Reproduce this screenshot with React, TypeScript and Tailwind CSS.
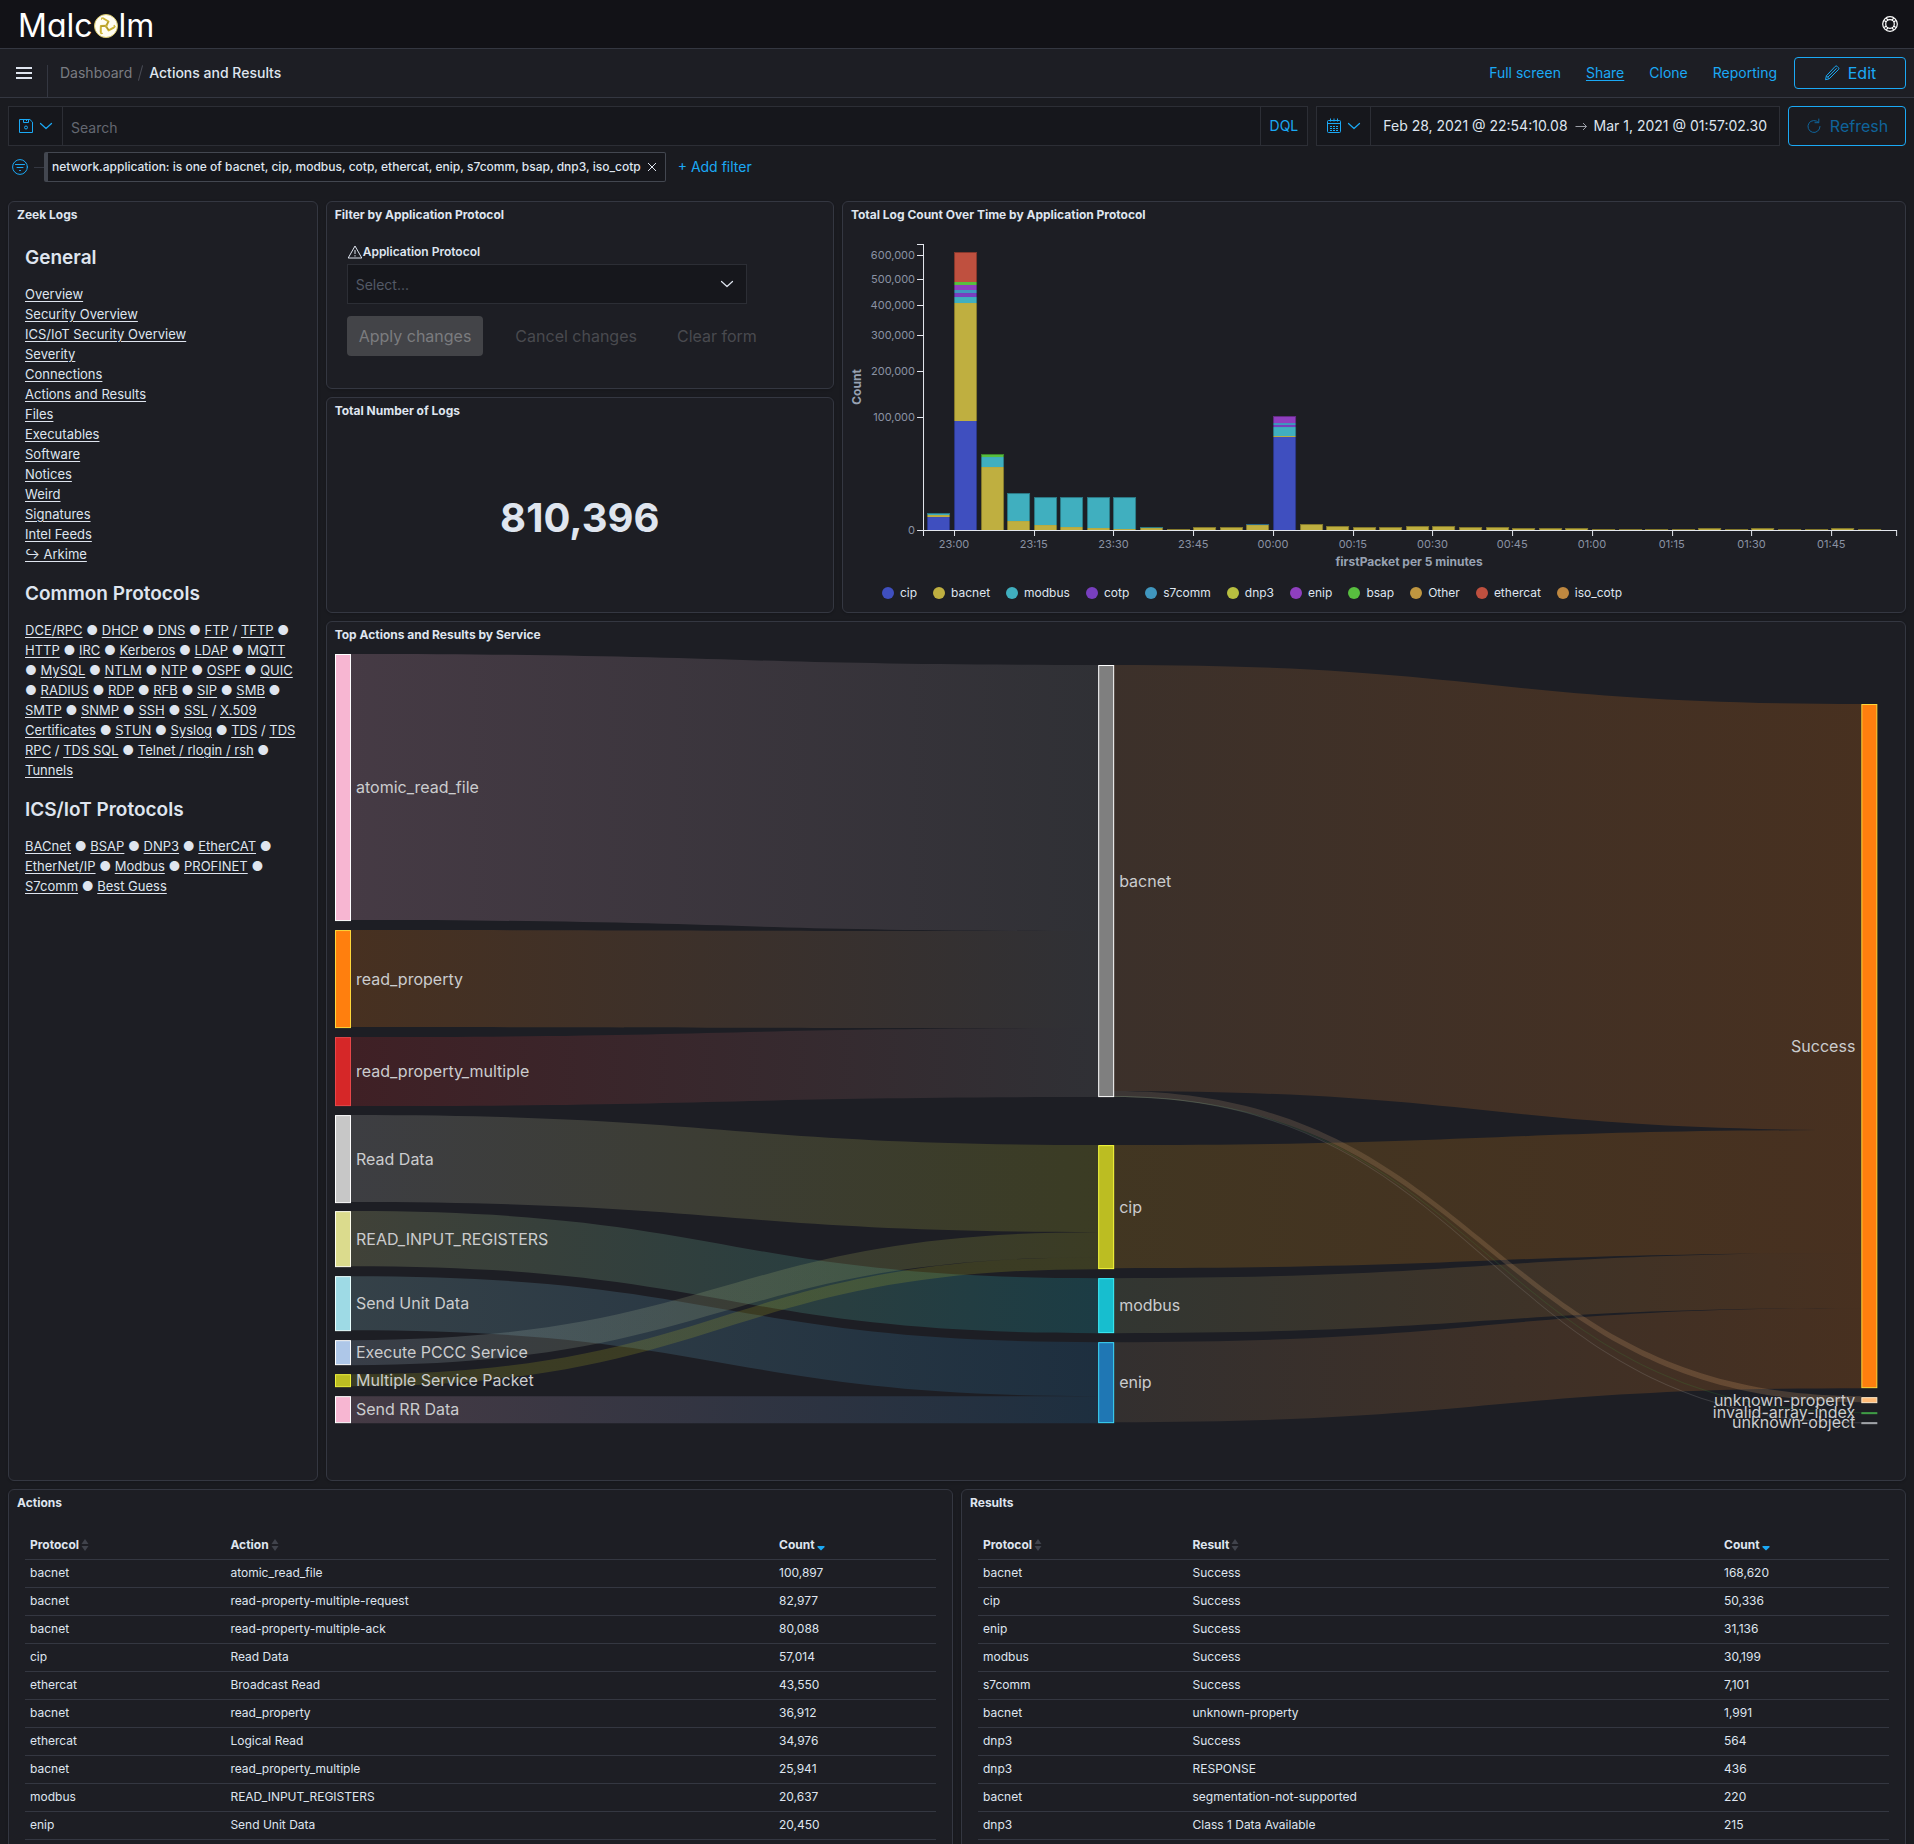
import { Fragment, type ReactNode } from 'react';

/* ---------- icons ---------- */

function MenuIcon() {
  return (
    <svg width="16" height="16" viewBox="0 0 16 16" fill="#dfe5ef" aria-hidden="true">
      <path d="M0 2h16v2H0zM0 7h16v2H0zM0 12h16v2H0z" />
    </svg>
  );
}

function HelpIcon() {
  return (
    <svg width="16" height="16" viewBox="0 0 16 16" fill="none" stroke="#ffffff" strokeWidth="1.2" aria-hidden="true">
      <circle cx="8" cy="8" r="7.3" />
      <circle cx="8" cy="8" r="4.3" />
      <path d="M2.2 4.4 4.4 6M4.4 2.2 6 4.4M11.6 2.2 10 4.4M13.8 4.4 11.6 6M13.8 11.6 11.6 10M11.6 13.8 10 11.6M4.4 13.8 6 11.6M2.2 11.6 4.4 10" />
    </svg>
  );
}

function PencilIcon() {
  return (
    <svg width="16" height="16" viewBox="0 0 16 16" fill="none" stroke="currentColor" strokeLinejoin="round" aria-hidden="true">
      <path d="M11.2 1.4a1.4 1.4 0 0 1 2 0l1.2 1.2a1.4 1.4 0 0 1 0 2L5.2 13.8l-3.7.9.9-3.9z" />
      <path d="M2.4 10.8 5.2 13.8M3.8 12.2 12.6 3.3" />
    </svg>
  );
}

function SaveIcon() {
  return (
    <svg width="16" height="16" viewBox="0 0 16 16" fill="none" stroke="currentColor" aria-hidden="true">
      <path d="M1.5 1.5h10.4l2.6 2.6v10.4h-13z" />
      <path d="M5.5 1.5v3h5v-3M8.5 1.500v1.5" />
      <circle cx="8" cy="9.5" r="1.5" />
    </svg>
  );
}

function ChevronIcon() {
  return (
    <svg width="14" height="14" viewBox="0 0 14 14" fill="none" stroke="currentColor" strokeWidth="1.2" strokeLinecap="round" strokeLinejoin="round" aria-hidden="true">
      <path d="m1.5 4.5 5.5 5 5.5-5" />
    </svg>
  );
}

function CalendarIcon() {
  return (
    <svg width="16" height="16" viewBox="0 0 16 16" fill="none" stroke="currentColor" aria-hidden="true">
      <rect x="1.5" y="2.5" width="13" height="12" rx="1" />
      <path d="M1.5 5.5h13M4.5.5v3M8 .5v3M11.500.5v3" />
      <path d="M4 8.5h2M7 8.5h2M10 8.5h2M4 10.5h2M7 10.5h2M10 10.5h2M4 12.5h2M7 12.5h2M10 12.5h2" />
    </svg>
  );
}

function RefreshIcon() {
  return (
    <svg width="16" height="16" viewBox="0 0 16 16" fill="none" stroke="currentColor" strokeLinecap="round" aria-hidden="true">
      <path d="M12.5 4.5A6 6 0 1 0 14 8.5M12.800 1v3.7H9" />
    </svg>
  );
}

function FilterIcon() {
  return (
    <svg width="16" height="16" viewBox="0 0 16 16" fill="none" stroke="currentColor" strokeLinecap="round" aria-hidden="true">
      <circle cx="8" cy="8" r="7.4" />
      <path d="M3.500 5.5h9M5 8.5h6M7.5 11.5h1" />
    </svg>
  );
}

function WarningIcon() {
  return (
    <svg width="16" height="14" viewBox="0 0 16 14" fill="none" stroke="#dfe5ef" strokeLinejoin="round" aria-hidden="true">
      <path d="M8 1 1.2 13h13.6z" />
      <path d="M8 5v4M8 10.2v1.3" />
    </svg>
  );
}

function SortIcon() {
  return (
    <svg width="8" height="12" viewBox="0 0 8 12" fill="#40434c" aria-hidden="true">
      <path d="M4 0l3.500 5H.5zM4 12 .5 7h7z" />
    </svg>
  );
}

function SortDownIcon() {
  return (
    <svg width="8" height="12" viewBox="0 0 8 12" fill="#1ba9f5" aria-hidden="true">
      <path d="M.5 7h7v1.300L4 11.500.5 8.300z" />
    </svg>
  );
}

function Emblem() {
  return (
    <svg width="24" height="24" viewBox="0 0 24 24" aria-hidden="true">
      <circle cx="12" cy="12" r="11.5" fill="#fffdf2" stroke="#d8c766" />
      {[0, 120, 240].map((angle) => (
        <g key={angle} transform={`rotate(${angle} 12 12)`} fill="none" stroke="#cdb436" strokeLinecap="round" strokeLinejoin="round">
          <path d="M12 12.500 14.500 7.500 9.500 4.500" strokeWidth="2" />
          <path d="M9.500 4.500 8 3.800 7.500 5.200" strokeWidth="1.200" />
          <path d="M12.500 11 14 8" stroke="#8e7a1c" strokeWidth="0.600" />
        </g>
      ))}
    </svg>
  );
}

/* ---------- shared ---------- */

function Panel({ title, className, children }: { title: string; className: string; children: ReactNode }) {
  return (
    <section className={`flex min-w-0 flex-col overflow-hidden rounded-md border border-[#343741] bg-[#1d1e24] shadow-sm ${className}`}>
      <h2 className="px-2 py-1 text-xs leading-[18px] font-bold">{title}</h2>
      {children}
    </section>
  );
}

/* ---------- page header ---------- */

function TopBar() {
  return (
    <header className="flex h-[49px] items-center justify-between border-b border-[#343741] bg-[#121217] px-4">
      <a href="#home" aria-label="Malcolm" className="flex items-center gap-px pt-1 pl-0.5 text-[32px] leading-[44px] text-white [font-feature-settings:'cv11']">
        <span>Malc</span>
        <Emblem />
        <span>lm</span>
      </a>
      <button type="button" aria-label="Help">
        <HelpIcon />
      </button>
    </header>
  );
}

function NavBar() {
  return (
    <div className="flex h-[49px] items-center border-b border-[#343741] bg-[#1d1e24] pr-2 text-sm">
      <button type="button" aria-label="Menu" className="pr-[15px] pl-4">
        <MenuIcon />
      </button>
      <div className="h-8 w-px self-end bg-[#343741]" />
      <nav aria-label="Breadcrumb" className="flex items-center pl-3">
        <a href="#dashboards" className="text-[#7a7c82]">Dashboard</a>
        <span className="mx-2 h-4 w-px rotate-15 bg-[#4a4d57]" />
        <span className="font-medium">Actions and Results</span>
      </nav>
      <div className="ml-auto flex items-center text-[#1ba9f5]">
        <div className="mr-[17px] flex gap-[25px]">
          <button type="button">Full screen</button>
          <button type="button" className="underline underline-offset-2">Share</button>
          <button type="button">Clone</button>
          <button type="button">Reporting</button>
        </div>
        <button type="button" className="flex h-8 w-28 items-center justify-center gap-2 rounded border border-[#1ba9f5] text-base">
          <PencilIcon />
          Edit
        </button>
      </div>
    </div>
  );
}

function QueryBar() {
  return (
    <div className="flex gap-2 px-2 pt-2 text-sm">
      <div className="flex h-10 flex-1 border border-[#2c2e35] bg-[#16171c]">
        <button type="button" aria-label="Saved queries" className="flex w-[54px] items-center gap-[5px] border-r border-[#2c2e35] pl-[9px] text-[#1ba9f5]">
          <SaveIcon />
          <ChevronIcon />
        </button>
        <input aria-label="Search" placeholder="Search" className="min-w-0 flex-1 px-2 pt-1 placeholder-[#646871] outline-none" />
        <button type="button" className="border-l border-[#2c2e35] px-[9px] text-[#1ba9f5]">DQL</button>
      </div>
      <div className="flex h-10 border border-[#2c2e35] bg-[#16171c]">
        <button type="button" aria-label="Quick time ranges" className="flex w-[54px] items-center gap-[5px] border-r border-[#2c2e35] pl-[9px] text-[#1ba9f5]">
          <CalendarIcon />
          <ChevronIcon />
        </button>
        <div className="flex items-center gap-1.5 px-3">
          <button type="button">Feb 28, 2021 @ 22:54:10.08</button>
          <svg width="14" height="14" viewBox="0 0 14 14" fill="none" stroke="#9a9da5" aria-hidden="true">
            <path d="M1.5 7.5h11M9 4l3.5 3.5L9 11" />
          </svg>
          <button type="button">Mar 1, 2021 @ 01:57:02.30</button>
        </div>
      </div>
      <button type="button" className="flex h-10 w-[118px] items-center justify-center gap-2 rounded border border-[#1ba9f5] text-base text-[#0f649b]">
        <RefreshIcon />
        Refresh
      </button>
    </div>
  );
}

function FilterBar() {
  return (
    <div className="flex items-center px-3 pt-1.5">
      <button type="button" aria-label="Filter options" className="text-[#1ba9f5]">
        <FilterIcon />
      </button>
      <span className="ml-1.5 h-px w-[10px] bg-[#343741]" />
      <div className="flex h-[30px] items-center rounded-xs border border-l-4 border-[#434750] bg-[#16171c] pr-2 pl-1 text-xs font-medium">
        <button type="button">network.application: is one of bacnet, cip, modbus, cotp, ethercat, enip, s7comm, bsap, dnp3, iso_cotp</button>
        <button type="button" aria-label="Delete filter" className="ml-1.5">
          <svg width="10" height="10" viewBox="0 0 10 10" fill="none" stroke="#dfe5ef" aria-hidden="true">
            <path d="m1 1 8 8M9 1 1 9" />
          </svg>
        </button>
      </div>
      <button type="button" className="ml-3 text-sm text-[#1ba9f5]">+ Add filter</button>
    </div>
  );
}

/* ---------- Zeek logs ---------- */

const GENERAL = [
  'Overview', 'Security Overview', 'ICS/IoT Security Overview', 'Severity', 'Connections', 'Actions and Results', 'Files',
  'Executables', 'Software', 'Notices', 'Weird', 'Signatures', 'Intel Feeds', '↪ Arkime',
];

/* Each entry holds links that are separated by a slash. */
const COMMON = [
  ['DCE/RPC'], ['DHCP'], ['DNS'], ['FTP', 'TFTP'], ['HTTP'], ['IRC'], ['Kerberos'], ['LDAP'], ['MQTT'], ['MySQL'], ['NTLM'],
  ['NTP'], ['OSPF'], ['QUIC'], ['RADIUS'], ['RDP'], ['RFB'], ['SIP'], ['SMB'], ['SMTP'], ['SNMP'], ['SSH'],
  ['SSL', 'X.509 Certificates'], ['STUN'], ['Syslog'], ['TDS', 'TDS RPC', 'TDS SQL'], ['Telnet / rlogin / rsh'], ['Tunnels'],
];

const ICS = [['BACnet'], ['BSAP'], ['DNP3'], ['EtherCAT'], ['EtherNet/IP'], ['Modbus'], ['PROFINET'], ['S7comm'], ['Best Guess']];

function DocLink({ label }: { label: string }) {
  return <a href="#dashboard" className="underline underline-offset-2">{label}</a>;
}

function LinkCloud({ groups }: { groups: string[][] }) {
  return (
    <p>
      {groups.map((group, i) => (
        <Fragment key={i}>
          {i > 0 && ' ● '}
          {group.map((label, j) => (
            <Fragment key={label}>
              {j > 0 && ' / '}
              <DocLink label={label} />
            </Fragment>
          ))}
        </Fragment>
      ))}
    </p>
  );
}

function DocHeading({ children }: { children: string }) {
  return <h3 className="mb-3 text-[19px] leading-7 font-semibold">{children}</h3>;
}

function ZeekLogs() {
  return (
    <div className="flex flex-col gap-4 px-4 pt-4 text-[13px] leading-5">
      <div>
        <DocHeading>General</DocHeading>
        <ul>
          {GENERAL.map((label) => (
            <li key={label}><DocLink label={label} /></li>
          ))}
        </ul>
      </div>
      <div>
        <DocHeading>Common Protocols</DocHeading>
        <LinkCloud groups={COMMON} />
      </div>
      <div>
        <DocHeading>ICS/IoT Protocols</DocHeading>
        <LinkCloud groups={ICS} />
      </div>
    </div>
  );
}

/* ---------- filter form ---------- */

function FilterForm() {
  return (
    <form className="px-5 pt-4">
      <label htmlFor="protocol" className="flex h-4 items-center text-xs font-semibold">
        <WarningIcon />
        Application Protocol
      </label>
      <div className="relative mt-1 flex h-10 max-w-[400px] items-center border border-[#2c2e35] bg-[#16171c]">
        <input id="protocol" placeholder="Select..." className="h-full w-full px-2 text-sm placeholder-[#535966] outline-none" />
        <span className="pointer-events-none absolute right-3">
          <ChevronIcon />
        </span>
      </div>
      <div className="mt-3 flex text-base">
        <button type="button" disabled className="mr-3 h-10 rounded bg-[#434448] px-3 text-[#7b7c7f]">Apply changes</button>
        <button type="button" disabled className="px-5 text-[#494a4f]">Cancel changes</button>
        <button type="button" disabled className="px-5 text-[#494a4f]">Clear form</button>
      </div>
    </form>
  );
}

/* ---------- histogram ---------- */

const C = {
  cip: '#3f4fbf',
  bacnet: '#bfaf40',
  modbus: '#40afbf',
  cotp: '#783fbf',
  s7comm: '#4097bf',
  dnp3: '#b8bf40',
  enip: '#8f3fbf',
  bsap: '#58bf3f',
  Other: '#bf9640',
  ethercat: '#bf503f',
  iso_cotp: '#bf8840',
};

type Protocol = keyof typeof C;

/* One stack per five minutes; every part gives the height of its top edge above the axis. */
const STACKS: [Protocol, number][][] = [
  [['cip', 13], ['bacnet', 15], ['modbus', 17]],
  [['cip', 109], ['bacnet', 227], ['modbus', 233], ['cotp', 237], ['s7comm', 240], ['enip', 245], ['bsap', 248], ['ethercat', 278]],
  [['bacnet', 63], ['modbus', 73], ['bsap', 76]],
  [['bacnet', 9], ['modbus', 37]],
  [['bacnet', 5], ['modbus', 33]],
  [['bacnet', 3], ['modbus', 33]],
  [['bacnet', 2], ['modbus', 33]],
  [['bacnet', 1], ['modbus', 33]],
  [['bacnet', 2], ['modbus', 3]],
  [['bacnet', 1]],
  [['bacnet', 3]],
  [['bacnet', 3]],
  [['bacnet', 5], ['s7comm', 6]],
  [['cip', 93], ['bacnet', 94], ['modbus', 103], ['cotp', 105], ['s7comm', 107], ['enip', 114]],
  [['bacnet', 6]],
  [['bacnet', 4]],
  ...[3, 3, 4, 4, 3, 3, 2, 2, 2, 1, 1, 1, 1, 2, 1, 2, 1, 1, 2, 1].map((h): [Protocol, number][] => [['bacnet', h]]),
];

const COUNT_TICKS: [string, number][] = [
  ['600,000', 275], ['500,000', 251], ['400,000', 225], ['300,000', 195], ['200,000', 159], ['100,000', 113], ['0', 0],
];

const TIME_TICKS = ['23:00', '23:15', '23:30', '23:45', '00:00', '00:15', '00:30', '00:45', '01:00', '01:15', '01:30', '01:45'];

const AXIS_X = 80;
const AXIS_Y = 302;
const FIRST_HOUR = 111;
const BAR_PITCH = 26.58;

function Histogram() {
  return (
    <>
      <svg viewBox="0 0 1062 346" className="w-full" role="img" aria-label="Log count per five minutes">
        {STACKS.map((stack, i) => {
          const x = Math.round(FIRST_HOUR + (i - 1) * BAR_PITCH);
          return stack.map(([protocol, top], j) => {
            const bottom = j > 0 ? stack[j - 1][1] : 0;
            return <rect key={`${i}-${j}`} x={x} y={AXIS_Y - top} width="23" height={top - bottom} fill={C[protocol]} />;
          });
        })}
        {STACKS.map((stack, i) => {
          const x = Math.round(FIRST_HOUR + (i - 1) * BAR_PITCH);
          const top = stack[stack.length - 1][1];
          return <rect key={i} x={x + 0.5} y={AXIS_Y - top + 0.5} width="22" height={top} fill="none" stroke="#000" strokeOpacity="0.3" />;
        })}
        <g fill="none" stroke="#e4e7ee">
          <path d={`M${AXIS_X - 6} 16.5h6.5V${AXIS_Y + 6}`} />
          <path d={`M${AXIS_X} ${AXIS_Y + 0.5}H1053.5v5.5`} />
          {COUNT_TICKS.map(([label, h]) => (
            <path key={label} d={`M${AXIS_X - 6} ${AXIS_Y - h + 0.5}h6`} />
          ))}
          {TIME_TICKS.map((label, i) => (
            <path key={label} d={`M${Math.round(FIRST_HOUR + i * 3 * BAR_PITCH) + 0.5} ${AXIS_Y}v6`} />
          ))}
        </g>
        <g fill="#8a92a3" fontSize="11">
          {COUNT_TICKS.map(([label, h]) => (
            <text key={label} x={AXIS_X - 8} y={AXIS_Y - h + 4} textAnchor="end">{label}</text>
          ))}
          {TIME_TICKS.map((label, i) => (
            <text key={label} x={FIRST_HOUR + i * 3 * BAR_PITCH} y={AXIS_Y + 18} textAnchor="middle">{label}</text>
          ))}
        </g>
        <g fill="#98a2b3" fontSize="12" fontWeight="700" textAnchor="middle">
          <text transform="translate(18 159) rotate(-90)">Count</text>
          <text x="566" y={AXIS_Y + 36}>firstPacket per 5 minutes</text>
        </g>
      </svg>
      <ul className="mt-[11px] flex flex-wrap gap-4 pl-[39px] text-xs leading-4">
        {Object.entries(C).map(([label, color]) => (
          <li key={label} className="flex items-center gap-1.5">
            <span className="size-3 rounded-full" style={{ backgroundColor: color }} />
            {label}
          </li>
        ))}
      </ul>
    </>
  );
}

/* ---------- sankey ---------- */

type Node = { name: string; x: number; y0: number; y1: number; color: string; edge: string };

const NODE_W = 15;
const MID_X = 763;
const END_X = 1526;

const NODES: Node[] = [
  { name: 'atomic_read_file', x: 0, y0: 0, y1: 266, color: '#f7b6d2', edge: '#ffffff' },
  { name: 'read_property', x: 0, y0: 276, y1: 373, color: '#ff7f0e', edge: '#ffd83a' },
  { name: 'read_property_multiple', x: 0, y0: 383, y1: 451, color: '#d62728', edge: '#e8474a' },
  { name: 'Read Data', x: 0, y0: 461, y1: 548, color: '#c7c7c7', edge: '#ffffff' },
  { name: 'READ_INPUT_REGISTERS', x: 0, y0: 557, y1: 612, color: '#dbdb8d', edge: '#ffffee' },
  { name: 'Send Unit Data', x: 0, y0: 622, y1: 676, color: '#9edae5', edge: '#eaffff' },
  { name: 'Execute PCCC Service', x: 0, y0: 686, y1: 710, color: '#aec7e8', edge: '#ffffff' },
  { name: 'Multiple Service Packet', x: 0, y0: 720, y1: 732, color: '#bcbd22', edge: '#eef03c' },
  { name: 'Send RR Data', x: 0, y0: 742, y1: 768, color: '#f7b6d2', edge: '#ffffff' },
  { name: 'bacnet', x: MID_X, y0: 11, y1: 442, color: '#7f7f7f', edge: '#ffffff' },
  { name: 'cip', x: MID_X, y0: 491, y1: 614, color: '#bcbd22', edge: '#fcff3c' },
  { name: 'modbus', x: MID_X, y0: 624, y1: 678, color: '#17becf', edge: '#3cf4ff' },
  { name: 'enip', x: MID_X, y0: 688, y1: 768, color: '#1f77b4', edge: '#3cdcff' },
  { name: 'Success', x: END_X, y0: 50, y1: 733, color: '#ff7f0e', edge: '#ffd83a' },
  { name: 'unknown-property', x: END_X, y0: 743, y1: 748, color: '#ffbb78', edge: '#ffe9c8' },
  { name: 'invalid-array-index', x: END_X, y0: 758, y1: 758, color: '#2ca02c', edge: '#3f9b46' },
  { name: 'unknown-object', x: END_X, y0: 768, y1: 768, color: '#c7c7c7', edge: '#a0a3a8' },
];

/* source, target, top at the source, top at the target, thickness */
const LINKS: [string, string, number, number, number][] = [
  ['atomic_read_file', 'bacnet', 0, 11, 266],
  ['read_property', 'bacnet', 276, 277, 97],
  ['read_property_multiple', 'bacnet', 383, 374, 69],
  ['Read Data', 'cip', 461, 491, 87],
  ['READ_INPUT_REGISTERS', 'modbus', 557, 624, 55],
  ['Send Unit Data', 'enip', 622, 688, 54],
  ['Execute PCCC Service', 'cip', 686, 578, 25],
  ['Multiple Service Packet', 'cip', 720, 603, 12],
  ['Send RR Data', 'enip', 742, 742, 27],
  ['bacnet', 'Success', 11, 50, 426],
  ['cip', 'Success', 491, 476, 123],
  ['modbus', 'Success', 624, 599, 55],
  ['enip', 'Success', 688, 654, 80],
  ['bacnet', 'unknown-property', 437, 742, 6],
  ['bacnet', 'invalid-array-index', 442, 758, 1],
  ['bacnet', 'unknown-object', 442, 768, 1],
];

function ribbon(x0: number, x1: number, a: number, b: number, h: number) {
  const m = (x0 + x1) / 2;
  return `M${x0} ${a}C${m} ${a} ${m} ${b} ${x1} ${b}V${b + h}C${m} ${b + h} ${m} ${a + h} ${x0} ${a + h}Z`;
}

function Sankey() {
  const byName = Object.fromEntries(NODES.map((n) => [n.name, n]));
  return (
    <svg viewBox="0 -6 1562 790" className="mx-2 block" role="img" aria-label="Actions and results by service">
      <defs>
        {LINKS.map(([from, to], i) => (
          <linearGradient key={i} id={`flow-${i}`} gradientUnits="userSpaceOnUse" x1="0" x2={byName[to].x} y1="0" y2="0">
            <stop offset="0" stopColor={byName[from].color} />
            <stop offset="1" stopColor={byName[to].color} />
          </linearGradient>
        ))}
      </defs>
      {LINKS.map(([from, to, a, b, h], i) => (
        <path key={i} d={ribbon(byName[from].x + NODE_W + 0.5, byName[to].x, a, b, h)} fill={`url(#flow-${i})`} fillOpacity="0.19" />
      ))}
      {NODES.map((n) => (
        <rect key={n.name} x={n.x + 0.5} y={n.y0 + 0.5} width={NODE_W} height={Math.max(n.y1 - n.y0, 1)} fill={n.color} stroke={n.edge} />
      ))}
      <g fill="#cbccce" fontSize="16">
        {NODES.map((n) => (
          <text key={n.name} x={n.x === END_X ? n.x - 6 : n.x + 21} y={(n.y0 + n.y1) / 2 + 6} textAnchor={n.x === END_X ? 'end' : 'start'}>
            {n.name}
          </text>
        ))}
      </g>
    </svg>
  );
}

/* ---------- tables ---------- */

const ACTIONS = [
  ['bacnet', 'atomic_read_file', '100,897'],
  ['bacnet', 'read-property-multiple-request', '82,977'],
  ['bacnet', 'read-property-multiple-ack', '80,088'],
  ['cip', 'Read Data', '57,014'],
  ['ethercat', 'Broadcast Read', '43,550'],
  ['bacnet', 'read_property', '36,912'],
  ['ethercat', 'Logical Read', '34,976'],
  ['bacnet', 'read_property_multiple', '25,941'],
  ['modbus', 'READ_INPUT_REGISTERS', '20,637'],
  ['enip', 'Send Unit Data', '20,450'],
];

const RESULTS = [
  ['bacnet', 'Success', '168,620'],
  ['cip', 'Success', '50,336'],
  ['enip', 'Success', '31,136'],
  ['modbus', 'Success', '30,199'],
  ['s7comm', 'Success', '7,101'],
  ['bacnet', 'unknown-property', '1,991'],
  ['dnp3', 'Success', '564'],
  ['dnp3', 'RESPONSE', '436'],
  ['bacnet', 'segmentation-not-supported', '220'],
  ['dnp3', 'Class 1 Data Available', '215'],
];

function CountTable({ name, rows, first, last }: { name: string; rows: string[][]; first: string; last: string }) {
  return (
    <div className="px-4 pt-[15px]">
      <table className="w-full table-fixed border-collapse text-xs leading-5">
        <thead>
          <tr className="border-b border-[#343741]">
            {['Protocol', name, 'Count'].map((label, i) => (
              <th key={label} className={`h-7 px-[5px] text-left font-bold ${i === 0 ? first : ''} ${i === 2 ? last : ''}`}>
                <button type="button" className="flex items-center gap-0.5">
                  {label}
                  {i === 2 ? <SortDownIcon /> : <SortIcon />}
                </button>
              </th>
            ))}
          </tr>
        </thead>
        <tbody>
          {rows.map((row, i) => (
            <tr key={i} className="border-b border-[#343741]">
              {row.map((cell, j) => (
                <td key={j} className="h-7 px-[5px]">{cell}</td>
              ))}
            </tr>
          ))}
        </tbody>
      </table>
    </div>
  );
}

/* ---------- page ---------- */

export default function App() {
  return (
    <div className="h-screen overflow-hidden bg-[#1a1b20] font-[Inter,sans-serif] text-[#dfe5ef]">
      <TopBar />
      <NavBar />
      <QueryBar />
      <FilterBar />
      <main className="mt-[19px] grid auto-rows-[20px] grid-cols-48 gap-2 px-2">
        <Panel title="Zeek Logs" className="col-span-8 row-span-46">
          <ZeekLogs />
        </Panel>
        <Panel title="Filter by Application Protocol" className="col-span-13 row-span-7">
          <FilterForm />
        </Panel>
        <Panel title="Total Log Count Over Time by Application Protocol" className="col-span-27 row-span-15">
          <Histogram />
        </Panel>
        <Panel title="Total Number of Logs" className="col-span-13 row-span-8">
          <div className="flex flex-1 items-center justify-center text-[40px] leading-none font-bold">810,396</div>
        </Panel>
        <Panel title="Top Actions and Results by Service" className="col-span-40 row-span-31">
          <Sankey />
        </Panel>
        <Panel title="Actions" className="col-span-24 row-span-14">
          <CountTable name="Action" rows={ACTIONS} first="w-[22%]" last="w-[162px]" />
        </Panel>
        <Panel title="Results" className="col-span-24 row-span-14">
          <CountTable name="Result" rows={RESULTS} first="w-[23%]" last="w-[170px]" />
        </Panel>
      </main>
    </div>
  );
}
